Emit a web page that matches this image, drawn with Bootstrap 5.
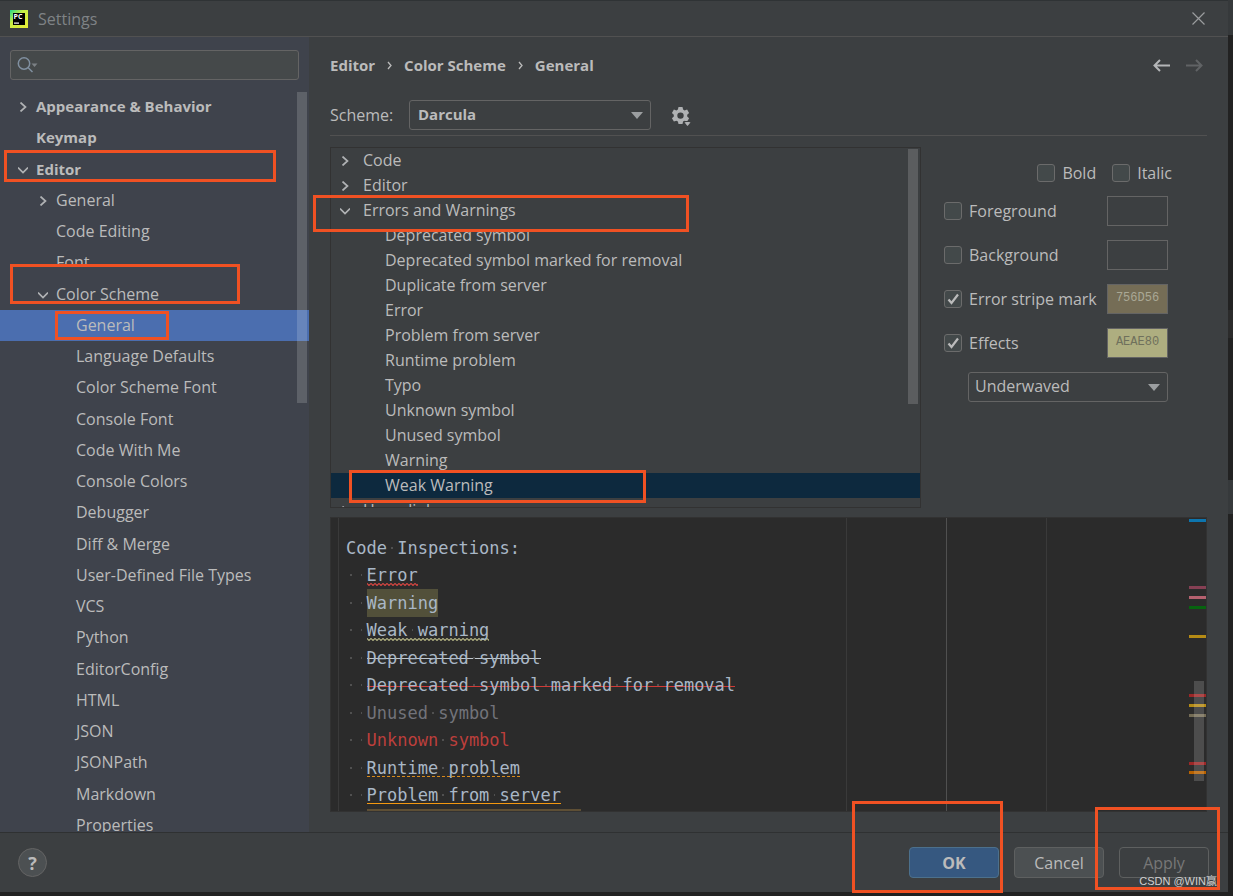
<!DOCTYPE html>
<html lang="en">
<head>
<meta charset="utf-8">
<meta name="viewport" content="width=device-width, initial-scale=1">
<title>Settings</title>
<link href="https://cdn.jsdelivr.net/npm/bootstrap@5.3.0/dist/css/bootstrap.min.css" rel="stylesheet">
<style>
:root { --panel:#3c3f41; --line:#323232; --edge:#646464; --ink:#bbbbbb; --side:#3f434c; --hot:#f05123; }
body { margin:0; background:#242424; color:var(--ink); font-family:"Open Sans","Noto Sans",sans-serif; font-size:16px; line-height:24px; overflow:hidden; }
.screen { height:100vh; padding:0 5px 4px 0; background:linear-gradient(#36393b 35px,#222 35px,#222 310px,#2b2b2b 310px,#2b2b2b 338px,#222 338px,#222 480px,#36393b 480px,#36393b 514px,#222 514px); }
.dialog { background:var(--panel); border-top:1px solid #2f3335; }
.titlebar { height:36px; border-bottom:1px solid #515151; padding:0 23px 0 10px; gap:10px; color:#7f8386; }
.plain { background:none; border:0; padding:0; line-height:0; color:inherit; }
.sidebar { width:309px; background:var(--side); }
.search-wrap { margin:13px 10px 11px; position:relative; }
.search-wrap svg { position:absolute; left:7px; top:6px; }
.search-box { height:30px; background:#45494a; border:1px solid var(--edge); border-radius:3px; color:var(--ink); padding-left:32px; }
.tree { list-style:none; margin:0; padding:0; }
.tree a { color:inherit; text-decoration:none; position:relative; z-index:1; white-space:nowrap; padding-bottom:2px; }
.tree li { position:relative; display:flex; align-items:center; }
.tree svg { flex:none; position:relative; z-index:1; width:10px; height:10px; }
.nav-tree { display:grid; grid-auto-rows:31px 32px 31px 31px; }
.lv0 { padding-left:18px; gap:8px; font-weight:700; font-size:15px; }
.lv0.leaf { padding-left:36px; }
.lv1 { padding-left:38px; gap:8px; }
.lv1.leaf { padding-left:56px; }
.lv2 { padding-left:76px; }
.nav-tree .chosen { background:#4b6eaf; }
.thumb { position:absolute; width:10px; background:rgba(255,255,255,.16); z-index:2; }
.hot { position:absolute; border:3px solid var(--hot); pointer-events:none; z-index:3; }
.pane { padding:16px 21px 20px; }
.crumbs { height:24px; font-weight:700; font-size:15px; }
.pick { height:30px; background:var(--panel); border:1px solid var(--edge); border-radius:3px; color:var(--ink); appearance:none; padding:0 6px 2px; width:100%; display:block; line-height:24px; }
.pick.fw-bold { font-size:15px; padding:0 8px 2px; }
.pick-wrap { position:relative; }
.pick-wrap::after { content:""; position:absolute; right:8px; top:12px; border:6px solid transparent; border-top:7px solid #9b9ea0; border-bottom:0; pointer-events:none; }
.scheme-row { height:44px; margin-top:15px; border-bottom:1px solid #515151; padding-bottom:5px; margin-bottom:11px; line-height:30px; }
.color-list { height:361px; border:1px solid var(--line); overflow:hidden; }
.color-list li { height:25px; padding-left:9px; gap:13px; }
.color-list li.item { padding-left:54px; }
.color-list .chosen { background:#0d293e; }
.attrs { width:286px; padding:9px 39px 0 23px; }
.attr-row { height:44px; display:flex; align-items:center; justify-content:space-between; }
.attr-row.top-row { height:33px; justify-content:flex-end; gap:16px; margin-right:-4px; }
.attrs label { display:flex; align-items:center; gap:7px; }
.tick { appearance:none; width:18px; height:18px; margin:0; border:1px solid #6b6b6b; border-radius:3px; background:#43494a; }
.tick:checked { background:#43494a url("data:image/svg+xml,%3Csvg xmlns='http://www.w3.org/2000/svg' viewBox='0 0 16 16'%3E%3Cpath d='M3.5 8.5 6.5 12 13 3.5' fill='none' stroke='%23bbb' stroke-width='2.2'/%3E%3C/svg%3E"); }
.swatch { width:61px; height:30px; border:1px solid var(--edge); background:none; padding:0 0 3px; color:#aaa895; font:12px/24px "Liberation Mono",monospace; text-align:center; border-radius:0; }
.preview { margin-top:9px; background:#2b2b2b; border:1px solid #323232; position:relative; overflow:hidden; min-height:0; }
.guide { position:absolute; top:0; bottom:0; width:1px; background:#3a3a3a; }
.code { position:absolute; left:15px; top:16px; display:grid; grid-auto-rows:27px 28px; font-family:"DejaVu Sans Mono",monospace; font-size:17px; line-height:28px; color:#a9b7c6; white-space:pre; margin:0; }
.code i { background:radial-gradient(circle at 50% 50%,#505050 0 1px,transparent 1px); }
.code span { display:inline-block; height:28px; }
.wave { background:repeat-x 0 22px / 4px 3px; }
.wave.red { background-image:url("data:image/svg+xml,%3Csvg xmlns='http://www.w3.org/2000/svg' width='4' height='3' viewBox='0 0 4 3'%3E%3Cpath d='M-1 -.5 2 2.5 5 -.5' fill='none' stroke='%23d04440' stroke-width='1.2'/%3E%3C/svg%3E"); }
.wave.pale { background-image:url("data:image/svg+xml,%3Csvg xmlns='http://www.w3.org/2000/svg' width='4' height='3' viewBox='0 0 4 3'%3E%3Cpath d='M-1 -.5 2 2.5 5 -.5' fill='none' stroke='%23aeae80' stroke-width='1.2'/%3E%3C/svg%3E"); }
.strike { background:linear-gradient(#c0c8ce,#c0c8ce) 0 14px/100% 1px no-repeat; }
.strike.red { background:linear-gradient(#d03a36,#d03a36) 0 15px/100% 1px no-repeat; }
.mark-bar { position:absolute; right:0; width:17px; height:3px; }
.footbar { height:60px; border-top:1px solid #2f3132; padding:0 19px 0 18px; gap:15px; }
.help { width:29px; height:29px; border-radius:50%; border:1px solid var(--edge); background:#4c5052; color:var(--ink); font-weight:700; font-size:18px; padding:0; line-height:24px; }
.push { width:90px; height:31px; border:1px solid #5e6060; border-radius:4px; background:#4c5052; color:var(--ink); padding:0; line-height:24px; }
.push.main { background:#365880; border-color:#4c708c; font-weight:700; }
.push:disabled { background:none; color:#777; }
.stamp { position:absolute; right:11px; bottom:3px; font:11px/16px "Liberation Sans","Noto Sans CJK SC",sans-serif; color:#d0d0d0; white-space:nowrap; z-index:4; }
</style>
</head>
<body>
<svg width="0" height="0" class="position-absolute">
  <symbol id="right" viewBox="0 0 10 10"><path d="M2.5.5 7.5 5 2.5 9.5" fill="none" stroke="#b0b2b4" stroke-width="1.7"/></symbol>
  <symbol id="down" viewBox="0 0 10 10"><path d="M0 2.5 5 7.5 10 2.5" fill="none" stroke="#b0b2b4" stroke-width="1.7"/></symbol>
</svg>
<div class="screen">
<div class="dialog h-100 d-flex flex-column position-relative">
  <header class="titlebar d-flex align-items-center flex-shrink-0">
    <svg width="18" height="18" viewBox="0 0 18 18"><defs><linearGradient id="g" x1="0" y1="0" x2="1" y2="1"><stop offset="0" stop-color="#21d789"/><stop offset=".4" stop-color="#c9ee45"/><stop offset="1" stop-color="#e9ee35"/></linearGradient></defs><path fill="url(#g)" d="M0 0h18v18H0z"/><path d="M3 3h12v12H3z"/><text x="3.5" y="9" font-size="7" font-weight="700" font-family="Open Sans" fill="#fff">PC</text><path d="M4 12.5h5v1.2H4z" fill="#fff"/></svg>
    <span>Settings</span>
    <button class="plain ms-auto" aria-label="Close"><svg width="13" height="13" viewBox="0 0 13 13"><path d="m.5.5 12 12m0-12-12 12" stroke="#9a9c9e" stroke-width="1.2"/></svg></button>
  </header>

  <div class="d-flex flex-grow-1 overflow-hidden">
    <nav class="sidebar flex-shrink-0 position-relative overflow-hidden">
      <div class="search-wrap">
        <input class="search-box w-100 d-block" type="search" aria-label="Search settings">
        <svg width="22" height="18" viewBox="0 0 22 18"><g fill="none" stroke="#8090a0" stroke-width="1.5"><circle cx="7" cy="7.500" r="5.700"/><path d="m11 11.500 4.500 4.500"/></g><path d="M14.500 7.500h6l-3 3.500z" fill="#7c8185"/></svg>
      </div>
      <ul class="tree nav-tree">
        <li class="lv0"><svg><use href="#right"/></svg><a href="#">Appearance &amp; Behavior</a></li>
        <li class="lv0 leaf"><a href="#">Keymap</a></li>
        <li class="lv0"><svg><use href="#down"/></svg><a href="#">Editor</a><span class="hot" style="left:4px;top:-4px;width:272px;height:32px"></span></li>
        <li class="lv1"><svg><use href="#right"/></svg><a href="#">General</a></li>
        <li class="lv1 leaf"><a href="#">Code Editing</a></li>
        <li class="lv1 leaf"><a href="#">Font</a></li>
        <li class="lv1"><span class="hot z-1" style="left:10px;top:-15px;width:230px;height:40px;background:#3f434c"></span><svg><use href="#down"/></svg><a href="#">Color Scheme</a></li>
        <li class="lv2 chosen"><a href="#">General</a><span class="hot" style="left:55px;top:1px;width:114px;height:29px"></span></li>
        <li class="lv2"><a href="#">Language Defaults</a></li>
        <li class="lv2"><a href="#">Color Scheme Font</a></li>
        <li class="lv2"><a href="#">Console Font</a></li>
        <li class="lv2"><a href="#">Code With Me</a></li>
        <li class="lv2"><a href="#">Console Colors</a></li>
        <li class="lv2"><a href="#">Debugger</a></li>
        <li class="lv2"><a href="#">Diff &amp; Merge</a></li>
        <li class="lv2"><a href="#">User-Defined File Types</a></li>
        <li class="lv2"><a href="#">VCS</a></li>
        <li class="lv2"><a href="#">Python</a></li>
        <li class="lv2"><a href="#">EditorConfig</a></li>
        <li class="lv2"><a href="#">HTML</a></li>
        <li class="lv2"><a href="#">JSON</a></li>
        <li class="lv2"><a href="#">JSONPath</a></li>
        <li class="lv2"><a href="#">Markdown</a></li>
        <li class="lv2"><a href="#">Properties</a></li>
      </ul>
      <div class="thumb" style="right:2px;top:55px;height:311px"></div>
    </nav>

    <main class="pane flex-grow-1 d-flex flex-column">
      <div class="crumbs d-flex align-items-center">
        <span>Editor</span><svg class="mx-2" width="13" height="9" viewBox="0 0 8 9"><path d="m2.500 1 3 3.500-3 3.500" fill="none" stroke="#bbb" stroke-width="1.3"/></svg><span>Color Scheme</span><svg class="mx-2" width="13" height="9" viewBox="0 0 8 9"><path d="m2.500 1 3 3.500-3 3.500" fill="none" stroke="#bbb" stroke-width="1.3"/></svg><span>General</span>
        <button class="plain ms-auto" aria-label="Back"><svg width="17" height="13" viewBox="0 0 17 13"><path d="M1.500 6.500H17M7 1 1.500 6.500 7 12" fill="none" stroke="#b4b6b8" stroke-width="2"/></svg></button>
        <button class="plain mx-3 me-1" aria-label="Forward" disabled><svg width="17" height="13" viewBox="0 0 17 13"><path d="M0 6.500h15.500M10 1l5.500 5.500L10 12" fill="none" stroke="#606365" stroke-width="2"/></svg></button>
      </div>
      <div class="scheme-row d-flex align-items-end flex-shrink-0">
        <label for="scheme" style="width:79px">Scheme:</label>
        <div class="pick-wrap" style="width:242px"><select id="scheme" class="pick fw-bold"><option>Darcula</option></select></div>
        <button class="plain ms-3 ps-1" aria-label="Scheme actions"><svg width="22" height="26" viewBox="0 0 22 26"><g fill="#afb1b3"><path fill-rule="evenodd" d="M7.500 3h4l.6 2.600 1.500.8 2.500-.8 2 3.400-1.900 1.800v1.600l1.900 1.800-2 3.400-2.500-.8-1.500.8-.6 2.500h-4l-.6-2.500-1.500-.8-2.500.8-2-3.400 1.900-1.800v-1.600L.9 9l2-3.400 2.500.8 1.500-.8zM9.500 8.400a3.200 3.200 0 1 0 0 6.400 3.200 3.200 0 0 0 0-6.400"/><path d="M13 17.500h7l-3.500 4.500z" stroke="#3c3f41"/><path d="M13.500 18.500h6l-3 3.500z"/></g></svg></button>
      </div>
      <div class="d-flex flex-shrink-0">
        <div class="color-list flex-grow-1 position-relative">
          <ul class="tree">
            <li><svg><use href="#right"/></svg><a href="#">Code</a></li>
            <li><svg><use href="#right"/></svg><a href="#">Editor</a></li>
            <li><svg><use href="#down"/></svg><a href="#">Errors and Warnings</a></li>
            <li class="item"><a href="#">Deprecated symbol</a></li>
            <li class="item"><a href="#">Deprecated symbol marked for removal</a></li>
            <li class="item"><a href="#">Duplicate from server</a></li>
            <li class="item"><a href="#">Error</a></li>
            <li class="item"><a href="#">Problem from server</a></li>
            <li class="item"><a href="#">Runtime problem</a></li>
            <li class="item"><a href="#">Typo</a></li>
            <li class="item"><a href="#">Unknown symbol</a></li>
            <li class="item"><a href="#">Unused symbol</a></li>
            <li class="item"><a href="#">Warning</a></li>
            <li class="item chosen"><a href="#">Weak Warning</a><span class="hot" style="left:18px;top:-3px;width:297px;height:33px"></span></li>
            <li><svg><use href="#right"/></svg><a href="#">Hyperlinks</a></li>
          </ul>
          <div class="thumb" style="right:2px;top:1px;height:255px"></div>
        </div>
        <form class="attrs flex-shrink-0">
          <div class="attr-row top-row">
            <label><input type="checkbox" class="tick">Bold</label>
            <label><input type="checkbox" class="tick">Italic</label>
          </div>
          <div class="attr-row"><label><input type="checkbox" class="tick">Foreground</label><button type="button" class="swatch" aria-label="Foreground colour"></button></div>
          <div class="attr-row"><label><input type="checkbox" class="tick">Background</label><button type="button" class="swatch" aria-label="Background colour"></button></div>
          <div class="attr-row"><label><input type="checkbox" class="tick" checked>Error stripe mark</label><button type="button" class="swatch" style="background:#756d56">756D56</button></div>
          <div class="attr-row"><label><input type="checkbox" class="tick" checked>Effects</label><button type="button" class="swatch" style="background:#aeae80;color:#6f705c">AEAE80</button></div>
          <div class="attr-row"><div class="pick-wrap flex-grow-1 ms-4"><select class="pick" aria-label="Effect type"><option>Underwaved</option></select></div></div>
        </form>
      </div>
      <section class="preview flex-grow-1">
        <div class="guide" style="left:7px"></div>
        <div class="guide" style="left:515px"></div>
        <div class="guide" style="left:615px;background:#505050"></div>
        <div class="guide" style="left:715px"></div>
        <div class="code"><div>Code<i> </i>Inspections:</div><div><i> </i><i> </i><span class="wave red">Error</span></div><div><i> </i><i> </i><span style="background:#52503a">Warning</span></div><div><i> </i><i> </i><span class="wave pale">Weak<i> </i>warning</span></div><div><i> </i><i> </i><span class="strike">Deprecated<i> </i>symbol</span></div><div><i> </i><i> </i><span class="strike red">Deprecated<i> </i>symbol<i> </i>marked<i> </i>for<i> </i>removal</span></div><div style="color:#72737a"><i> </i><i> </i>Unused<i> </i>symbol</div><div style="color:#bc3f3c"><i> </i><i> </i>Unknown<i> </i>symbol</div><div><i> </i><i> </i><span style="background:repeating-linear-gradient(90deg,#d98a1c 0 3px,transparent 3px 5px) 0 22px/100% 1px no-repeat">Runtime<i> </i>problem</span></div><div><i> </i><i> </i><span style="background:linear-gradient(#f49810,#f49810) 0 22px/100% 1px no-repeat">Problem<i> </i>from<i> </i>server</span></div><div><i> </i><i> </i><span style="background:#5e4f35">                     </span></div></div>
        <div class="mark-bar" style="top:1px;background:#0d75ae"></div>
        <div class="mark-bar" style="top:68px;background:#864054"></div>
        <div class="mark-bar" style="top:78px;background:#b5616f"></div>
        <div class="mark-bar" style="top:88px;background:#07640f"></div>
        <div class="mark-bar" style="top:117px;background:#b58b15"></div>
        <div class="mark-bar" style="top:176px;background:#9c2828"></div>
        <div class="mark-bar" style="top:186px;background:#b58b15"></div>
        <div class="mark-bar" style="top:196px;background:#756d56"></div>
        <div class="mark-bar" style="top:244px;background:#9c2828"></div>
        <div class="mark-bar" style="top:253px;background:#b86200"></div>
        <div class="thumb" style="right:2px;top:163px;height:100px"></div>
      </section>
    </main>
    <span class="hot" style="left:313px;top:194px;width:376px;height:37px"></span>
  </div>

  <footer class="footbar d-flex align-items-center flex-shrink-0 position-relative">
    <button class="help me-auto" aria-label="Help">?</button>
    <button class="push main">OK</button>
    <button class="push">Cancel</button>
    <button class="push" disabled>Apply</button>
    <span class="hot" style="right:225px;bottom:-1px;width:151px;height:92px"></span>
    <span class="hot" style="right:8px;bottom:2px;width:125px;height:83px"></span>
    <span class="stamp">CSDN @WIN赢</span>
  </footer>
</div>
</div>
<script src="https://cdn.jsdelivr.net/npm/bootstrap@5.3.0/dist/js/bootstrap.bundle.min.js"></script>
</body>
</html>
